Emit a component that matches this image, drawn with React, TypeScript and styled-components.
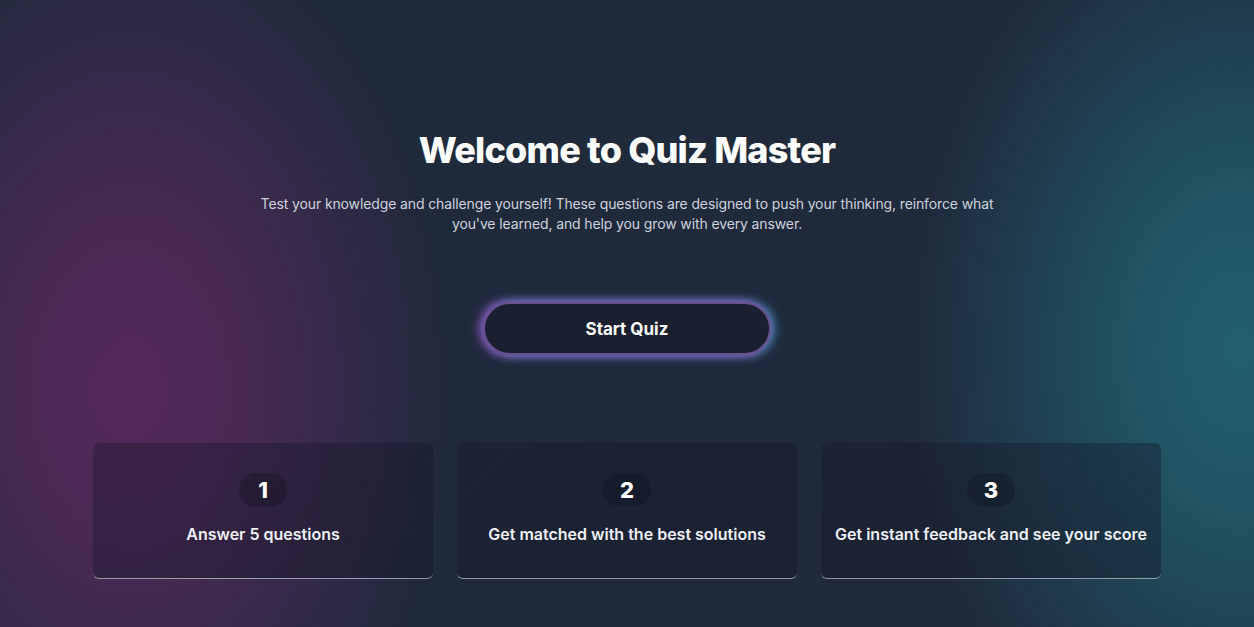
import React from "react";
import styled, { createGlobalStyle } from "styled-components";

const GlobalStyle = createGlobalStyle`
  html, body { margin: 0; padding: 0; }
  body { font-family: Inter, "Noto Sans", sans-serif; background: #1f2a3b; }
  * { box-sizing: border-box; }
`;

const Page = styled.main`
  min-height: 100vh;
  height: 627px;
  overflow: hidden;
  background:
    radial-gradient(ellipse 320px 480px at 130px 390px, rgba(86, 41, 92, 1) 0%, rgba(86, 41, 92, 0.75) 35%, rgba(86, 41, 92, 0) 100%),
    radial-gradient(ellipse 330px 480px at 1240px 350px, rgba(33, 96, 111, 1) 0%, rgba(33, 96, 111, 0.75) 35%, rgba(33, 96, 111, 0) 100%),
    #1f2a3b;
  display: flex;
  flex-direction: column;
  align-items: center;
  padding: 128px 93px 0;
  color: #ffffff;
`;

const Title = styled.h1`
  margin: 0;
  font-size: 36px;
  line-height: 44px;
  font-weight: 800;
  letter-spacing: -0.8px;
  text-align: center;
`;

const Subtitle = styled.p`
  margin: 22px 0 0;
  max-width: 750px;
  font-size: 14px;
  line-height: 20px;
  letter-spacing: -0.12px;
  color: #cdd3dc;
  text-align: center;
`;

const StartButton = styled.button`
  margin-top: 68px;
  width: 288px;
  height: 53px;
  border-radius: 999px;
  border: 2px solid #6a4f8e;
  background: #1a2030;
  color: #ffffff;
  font-family: inherit;
  font-size: 17px;
  font-weight: 700;
  cursor: pointer;
  box-shadow:
    -4px 0 12px rgba(176, 92, 230, 0.6),
    4px 0 12px rgba(70, 180, 220, 0.6),
    0 0 8px rgba(160, 110, 230, 0.6);
`;

const Steps = styled.section`
  margin-top: 88px;
  width: 100%;
  display: grid;
  grid-template-columns: repeat(3, 1fr);
  gap: 24px;
`;

const StepCard = styled.div`
  height: 136px;
  border-radius: 6px;
  background: linear-gradient(135deg, rgba(20, 22, 38, 0.32), rgba(20, 22, 38, 0.42));
  border-bottom: 1px solid rgba(200, 205, 215, 0.7);
  display: flex;
  flex-direction: column;
  align-items: center;
  padding-top: 30px;
`;

const StepNumber = styled.div`
  min-width: 48px;
  height: 34px;
  padding: 0 16px;
  border-radius: 999px;
  background: rgba(15, 18, 30, 0.35);
  display: flex;
  align-items: center;
  justify-content: center;
  font-size: 22px;
  font-weight: 800;
  color: #ffffff;
`;

const StepText = styled.p`
  margin: 17px 0 0;
  font-size: 16px;
  font-weight: 600;
  color: #eef0f4;
  text-align: center;
`;

const steps = [
  "Answer 5 questions",
  "Get matched with the best solutions",
  "Get instant feedback and see your score",
];

export default function App() {
  return (
    <>
      <GlobalStyle />
      <Page>
        <Title>Welcome to Quiz Master</Title>
        <Subtitle>
          Test your knowledge and challenge yourself! These questions are designed to push your thinking,
          reinforce what you've learned, and help you grow with every answer.
        </Subtitle>
        <StartButton>Start Quiz</StartButton>
        <Steps>
          {steps.map((s, i) => (
            <StepCard key={s}>
              <StepNumber>{i + 1}</StepNumber>
              <StepText>{s}</StepText>
            </StepCard>
          ))}
        </Steps>
      </Page>
    </>
  );
}
